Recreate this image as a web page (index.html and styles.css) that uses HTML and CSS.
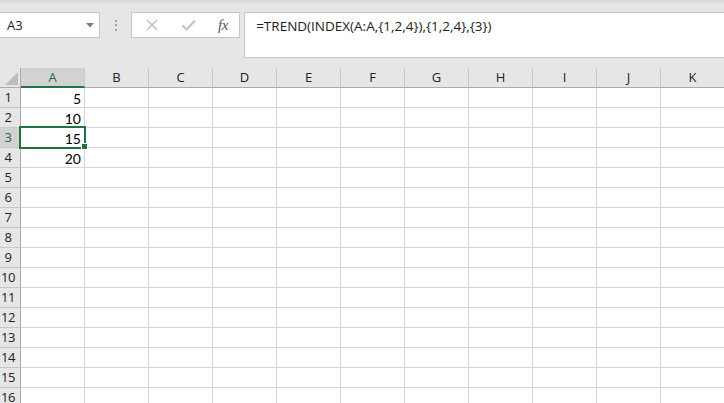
FILE: index.html
```html
<!DOCTYPE html>
<html>
<head>
<meta charset="utf-8">
<link rel="stylesheet" href="styles.css">
</head>
<body>
<div class="app">
  <div class="toolbar">
    <div class="namebox">
      <span class="name">A3</span>
      <svg class="caret" width="8" height="5" viewBox="0 0 8 5"><path d="M0 0H8L4 4.5Z" fill="#7a7a7a"/></svg>
    </div>
    <div class="grip"><i></i><i></i><i></i></div>
    <div class="fbuttons">
      <svg class="ic" width="14" height="14" viewBox="0 0 14 14"><path d="M2 2L12 12M12 2L2 12" stroke="#c2c2c2" stroke-width="1.6" fill="none"/></svg>
      <svg class="ic" width="16" height="14" viewBox="0 0 16 14"><path d="M1.5 7.5L5.5 11.5L14 2.5" stroke="#c2c2c2" stroke-width="2" fill="none"/></svg>
      <span class="fx">fx</span>
    </div>
    <div class="formula">=TREND(INDEX(A:A,{1,2,4}),{1,2,4},{3})</div>
  </div>
  <div class="sheet">
    <div class="corner"><svg width="13" height="13" viewBox="0 0 13 13"><path d="M13 0V13H0Z" fill="#bdbdbd"/></svg></div>
    <div class="ch sel">A</div><div class="ch">B</div><div class="ch">C</div><div class="ch">D</div><div class="ch">E</div><div class="ch">F</div><div class="ch">G</div><div class="ch">H</div><div class="ch">I</div><div class="ch">J</div><div class="ch">K</div>

    <div class="rh">1</div><div class="c num">5</div><div class="c"></div><div class="c"></div><div class="c"></div><div class="c"></div><div class="c"></div><div class="c"></div><div class="c"></div><div class="c"></div><div class="c"></div><div class="c"></div>
    <div class="rh">2</div><div class="c num">10</div><div class="c"></div><div class="c"></div><div class="c"></div><div class="c"></div><div class="c"></div><div class="c"></div><div class="c"></div><div class="c"></div><div class="c"></div><div class="c"></div>
    <div class="rh sel">3</div><div class="c num active">15<span class="selbox"></span><span class="handle"></span></div><div class="c"></div><div class="c"></div><div class="c"></div><div class="c"></div><div class="c"></div><div class="c"></div><div class="c"></div><div class="c"></div><div class="c"></div><div class="c"></div>
    <div class="rh">4</div><div class="c num">20</div><div class="c"></div><div class="c"></div><div class="c"></div><div class="c"></div><div class="c"></div><div class="c"></div><div class="c"></div><div class="c"></div><div class="c"></div><div class="c"></div>
    <div class="rh">5</div><div class="c"></div><div class="c"></div><div class="c"></div><div class="c"></div><div class="c"></div><div class="c"></div><div class="c"></div><div class="c"></div><div class="c"></div><div class="c"></div><div class="c"></div>
    <div class="rh">6</div><div class="c"></div><div class="c"></div><div class="c"></div><div class="c"></div><div class="c"></div><div class="c"></div><div class="c"></div><div class="c"></div><div class="c"></div><div class="c"></div><div class="c"></div>
    <div class="rh">7</div><div class="c"></div><div class="c"></div><div class="c"></div><div class="c"></div><div class="c"></div><div class="c"></div><div class="c"></div><div class="c"></div><div class="c"></div><div class="c"></div><div class="c"></div>
    <div class="rh">8</div><div class="c"></div><div class="c"></div><div class="c"></div><div class="c"></div><div class="c"></div><div class="c"></div><div class="c"></div><div class="c"></div><div class="c"></div><div class="c"></div><div class="c"></div>
    <div class="rh">9</div><div class="c"></div><div class="c"></div><div class="c"></div><div class="c"></div><div class="c"></div><div class="c"></div><div class="c"></div><div class="c"></div><div class="c"></div><div class="c"></div><div class="c"></div>
    <div class="rh">10</div><div class="c"></div><div class="c"></div><div class="c"></div><div class="c"></div><div class="c"></div><div class="c"></div><div class="c"></div><div class="c"></div><div class="c"></div><div class="c"></div><div class="c"></div>
    <div class="rh">11</div><div class="c"></div><div class="c"></div><div class="c"></div><div class="c"></div><div class="c"></div><div class="c"></div><div class="c"></div><div class="c"></div><div class="c"></div><div class="c"></div><div class="c"></div>
    <div class="rh">12</div><div class="c"></div><div class="c"></div><div class="c"></div><div class="c"></div><div class="c"></div><div class="c"></div><div class="c"></div><div class="c"></div><div class="c"></div><div class="c"></div><div class="c"></div>
    <div class="rh">13</div><div class="c"></div><div class="c"></div><div class="c"></div><div class="c"></div><div class="c"></div><div class="c"></div><div class="c"></div><div class="c"></div><div class="c"></div><div class="c"></div><div class="c"></div>
    <div class="rh">14</div><div class="c"></div><div class="c"></div><div class="c"></div><div class="c"></div><div class="c"></div><div class="c"></div><div class="c"></div><div class="c"></div><div class="c"></div><div class="c"></div><div class="c"></div>
    <div class="rh">15</div><div class="c"></div><div class="c"></div><div class="c"></div><div class="c"></div><div class="c"></div><div class="c"></div><div class="c"></div><div class="c"></div><div class="c"></div><div class="c"></div><div class="c"></div>
    <div class="rh">16</div><div class="c"></div><div class="c"></div><div class="c"></div><div class="c"></div><div class="c"></div><div class="c"></div><div class="c"></div><div class="c"></div><div class="c"></div><div class="c"></div><div class="c"></div>
  </div>
</div>
</body>
</html>
```

FILE: styles.css
```css
* { box-sizing: border-box; }
html, body { margin: 0; padding: 0; }
body {
  width: 724px;
  height: 403px;
  overflow: hidden;
  background: #e6e6e6;
  font-family: "Open Sans", "Noto Sans", sans-serif;
}
.app { width: 724px; height: 403px; overflow: hidden; }

.toolbar {
  height: 68px;
  display: flex;
  align-items: flex-start;
  padding-top: 12px;
  background: linear-gradient(#d3d3d3 0px, #e2e2e2 3px, #e6e6e6 5px);
}
.namebox {
  width: 102px;
  height: 26px;
  margin-left: -1px;
  background: #fff;
  border: 1px solid #c6c6c6;
  display: flex;
  align-items: center;
  justify-content: space-between;
  padding: 0 5px 0 7px;
}
.name { font-size: 13px; color: #222; }
.caret { margin-top: 1px; }
.grip {
  width: 31px;
  height: 26px;
  display: flex;
  flex-direction: column;
  align-items: center;
  justify-content: center;
  gap: 2.5px;
  padding-left: 1px;
}
.grip i { width: 2px; height: 2px; background: #a3a3a3; display: block; }
.fbuttons {
  width: 110px;
  height: 26px;
  background: #fff;
  border: 1px solid #c6c6c6;
  display: flex;
  align-items: center;
  padding-left: 13px;
}
.fbuttons .ic:first-child { margin-right: 22px; }
.fbuttons .ic:nth-child(2) { margin-right: 21px; }
.fx {
  font-family: "Liberation Serif", "DejaVu Serif", serif;
  font-style: italic;
  font-size: 15px;
  color: #555;
  letter-spacing: -0.5px;
}
.formula {
  margin-left: 4px;
  width: 484px;
  height: 46px;
  background: #fff;
  border: 1px solid #c6c6c6;
  border-right: none;
  padding: 3px 0 0 11px;
  font-size: 13.5px;
  color: #222;
  line-height: 20px;
}

.sheet {
  display: grid;
  grid-template-columns: 21px repeat(11, 64px);
  grid-auto-rows: 20px;
  background: #fff;
}
.corner {
  background: #e6e6e6;
  border-right: 1px solid #ababab;
  border-bottom: 1px solid #ababab;
  display: flex;
  align-items: flex-end;
  justify-content: flex-end;
  padding: 0 2px 2px 0;
}
.corner svg { display: block; }
.ch {
  background: #e6e6e6;
  border-right: 1px solid #c8c8c8;
  border-bottom: 1px solid #ababab;
  text-align: center;
  font-size: 13px;
  line-height: 19px;
  color: #222;
}
.ch.sel {
  background: #d2d2d2;
  border-bottom: 2px solid #217346;
  color: #1e6b41;
  line-height: 18px;
}
.rh {
  background: #e6e6e6;
  border-right: 1px solid #ababab;
  border-bottom: 1px solid #c8c8c8;
  font-size: 13px;
  line-height: 19px;
  text-align: center;
  padding-right: 4px;
  color: #222;
  letter-spacing: -0.5px;
}
.rh.sel { background: #d2d2d2; color: #1e6b41; }
.c {
  border-right: 1px solid #d4d4d4;
  border-bottom: 1px solid #d4d4d4;
  font-family: Lato, "Open Sans", sans-serif;
  font-size: 14px;
  line-height: 19px;
  color: #000;
}
.c.num { text-align: right; padding-right: 3px; padding-top: 1px; }
.c.active { position: relative; }
.selbox {
  position: absolute;
  left: -2px;
  top: -2px;
  width: 67px;
  height: 23px;
  border: 2px solid #217346;
}
.handle {
  position: absolute;
  left: 60px;
  top: 15px;
  width: 7px;
  height: 7px;
  background: #217346;
  border: 1px solid #fff;
}
```
